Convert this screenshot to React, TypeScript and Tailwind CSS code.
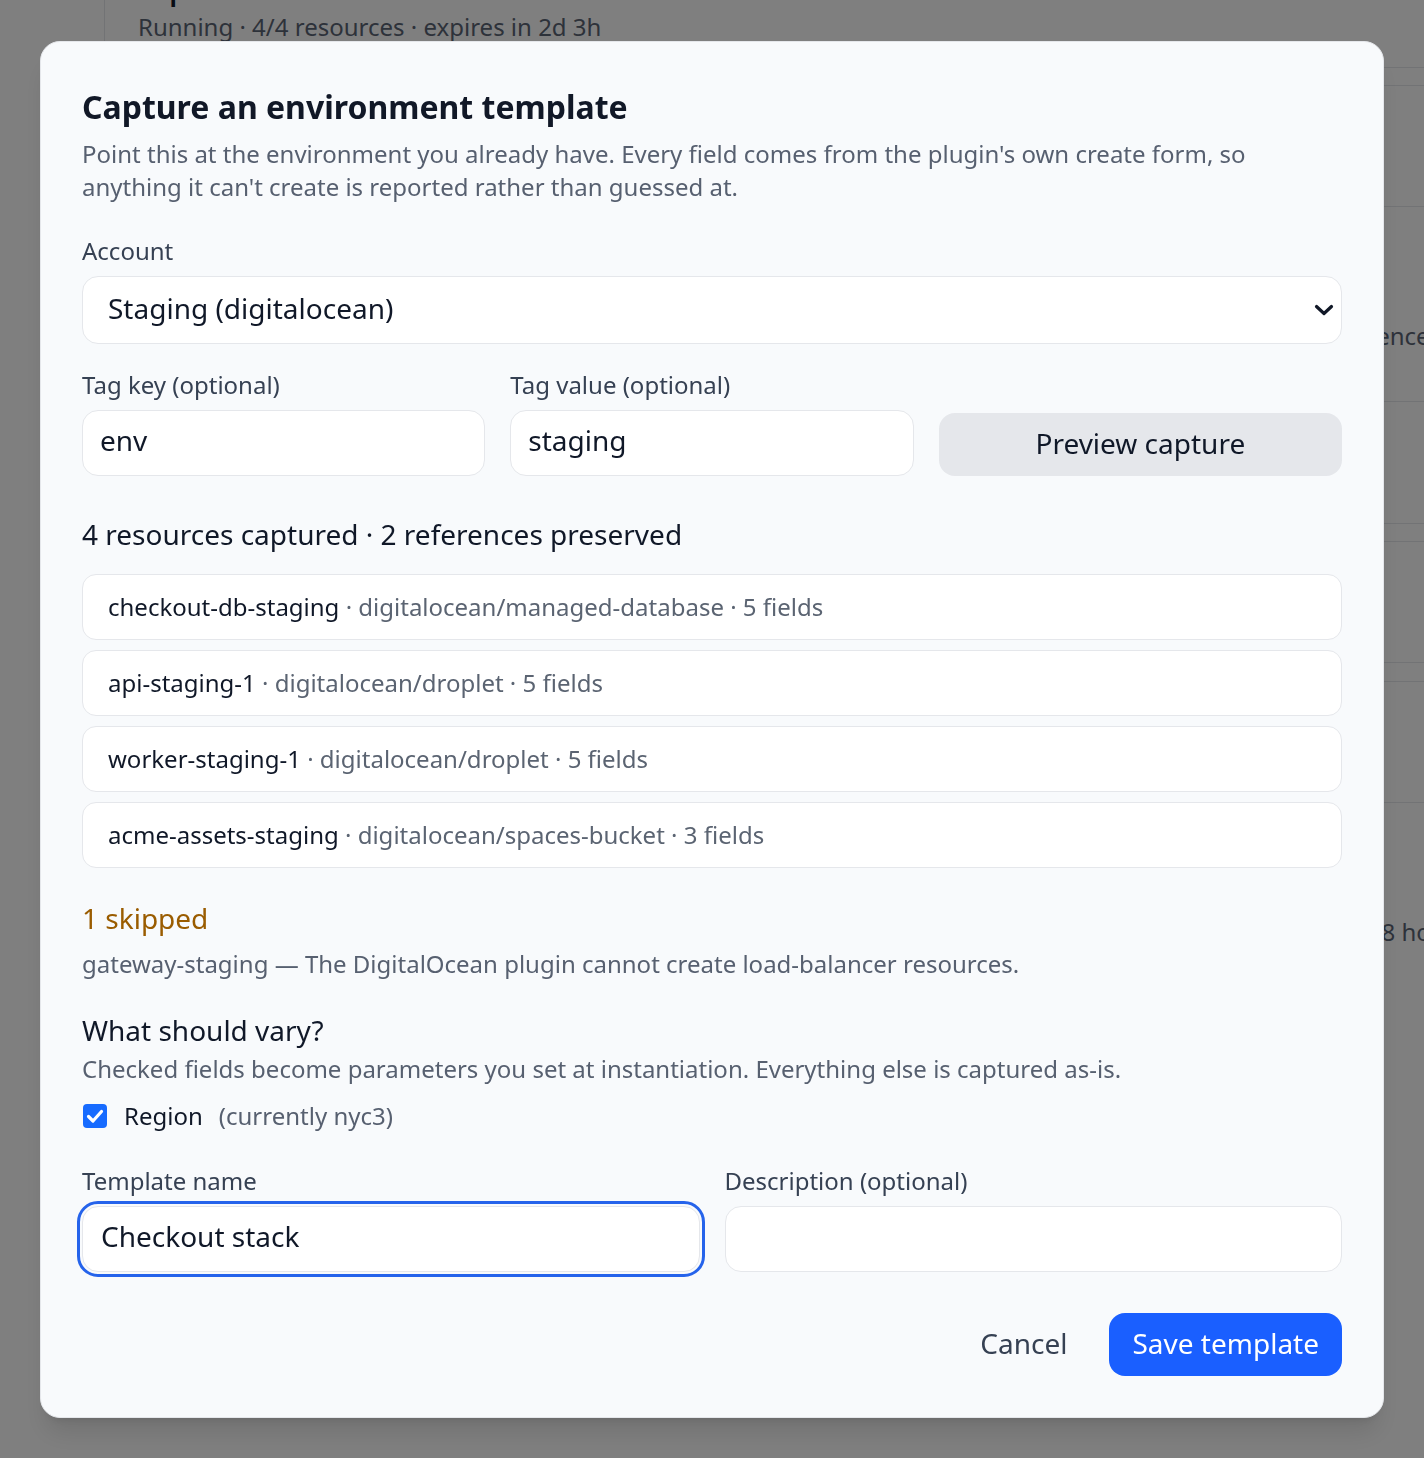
import React from "react";

const resources = [
  { name: "checkout-db-staging", meta: "digitalocean/managed-database · 5 fields" },
  { name: "api-staging-1", meta: "digitalocean/droplet · 5 fields" },
  { name: "worker-staging-1", meta: "digitalocean/droplet · 5 fields" },
  { name: "acme-assets-staging", meta: "digitalocean/spaces-bucket · 3 fields" },
];

function BackgroundPage() {
  return (
    <div className="flex h-full w-[1760px] items-start">
      <aside className="h-[900px] w-[105px] shrink-0 border-r border-gray-200" />
      <main className="flex-1 pl-[33px] pr-[40px]">
        <header className="-mt-[27px] border-b border-gray-200 pb-[24px]">
          <h1 className="text-[28px] font-semibold leading-[32px] text-gray-900">Express checkout</h1>
          <p className="mt-[5px] text-[24px] leading-[33px] text-[#5b6475]">Running · 4/4 resources · expires in 2d 3h</p>
        </header>
        <section className="mt-[17px] rounded-[14px] border border-gray-200">
          <div className="h-[121px] border-b border-gray-200 px-[24px]" />
          <div className="flex h-[195px] items-start border-b border-gray-200 px-[24px] pt-[112px] text-[24px] leading-[33px] text-[#5b6475]">
            <div className="w-[1159px] shrink-0">Captured resources</div>
            <div>references</div>
          </div>
          <div className="h-[121px] px-[24px]" />
        </section>
        <section className="mt-[17px] h-[122px] rounded-[14px] border border-gray-200" />
        <section className="mt-[18px] border-t border-gray-200">
          <div className="h-[121px] border-b border-gray-200" />
          <div className="flex h-[700px] items-start px-[25px] pt-[112px] text-[24px] leading-[33px] text-[#5b6475]">
            <div className="w-[1117px] shrink-0">Last activity</div>
            <div>Idle for 48 hours</div>
          </div>
        </section>
      </main>
    </div>
  );
}

function Label({ children }: { children: React.ReactNode }) {
  return <div className="text-[24px] leading-[36px] text-gray-700">{children}</div>;
}

export default function App() {
  return (
    <div className="relative h-[1458px] w-full overflow-hidden bg-white font-['Noto_Sans',sans-serif]">
      <BackgroundPage />
      <div className="fixed inset-0 flex items-center justify-center bg-black/50 p-[40px]">
        <div className="w-full rounded-[20px] border border-gray-200 bg-[#f8fafc] p-[41px] shadow-xl">
          <h2 className="text-[32px] font-bold leading-[48px] text-[#111827]">Capture an environment template</h2>
          <p className="mt-[6px] text-[24px] leading-[33px] text-[#576070]">
            Point this at the environment you already have. Every field comes from the plugin's own create form, so
            <br />
            anything it can't create is reported rather than guessed at.
          </p>

          <div className="mt-[30px]">
            <Label>Account</Label>
            <div className="mt-[7px] flex h-[68px] items-center justify-between rounded-[16px] border border-gray-200 bg-white pb-[3px] pl-[25px] pr-[7px] text-[28px] text-gray-900">
              <span>Staging (digitalocean)</span>
              <svg width="20" height="14" viewBox="0 0 20 14" fill="none" aria-hidden="true" className="mt-[3px]">
                <path d="M2.5 3.5 L10 10.5 L17.5 3.5" stroke="#111827" strokeWidth="3.2" strokeLinecap="round" strokeLinejoin="round" />
              </svg>
            </div>
          </div>

          <div className="mt-[23px] grid grid-cols-3 items-end gap-[25px]">
            <div>
              <Label>Tag key (optional)</Label>
              <input
                defaultValue="env"
                className="mt-[7px] h-[66px] w-full rounded-[16px] border border-gray-200 bg-white pb-[5px] pl-[17px] text-[28px] text-gray-900 outline-none"
              />
            </div>
            <div>
              <Label>Tag value (optional)</Label>
              <input
                defaultValue="staging"
                className="mt-[7px] h-[66px] w-full rounded-[16px] border border-gray-200 bg-white pb-[5px] pl-[17px] text-[28px] text-gray-900 outline-none"
              />
            </div>
            <button className="h-[63px] w-full rounded-[16px] bg-gray-200 pb-[3px] text-[28px] text-gray-900">Preview capture</button>
          </div>

          <div className="mt-[38px] text-[28px] leading-[40px] text-gray-900">4 resources captured · 2 references preserved</div>

          <div className="mt-[20px] flex flex-col gap-[10px]">
            {resources.map((r) => (
              <div
                key={r.name}
                className="flex h-[66px] items-center rounded-[14px] border border-gray-200 bg-white pl-[25px] text-[24px]"
              >
                <span className="text-gray-900">{r.name}</span>
                <span className="whitespace-pre text-[#5b6472]"> · {r.meta}</span>
              </div>
            ))}
          </div>

          <div className="mt-[30px] text-[28px] leading-[40px] text-[#9a5c00]">1 skipped</div>
          <p className="mt-[9px] text-[24px] leading-[33px] text-[#576070]">
            gateway-staging — The DigitalOcean plugin cannot create load-balancer resources.
          </p>

          <div className="mt-[30px] text-[28px] leading-[40px] text-gray-900">What should vary?</div>
          <p className="mt-[2px] text-[24px] leading-[33px] text-[#576070]">
            Checked fields become parameters you set at instantiation. Everything else is captured as-is.
          </p>
          <div className="mt-[13px] flex h-[36px] items-center gap-[17px] text-[24px]">
            <span className="ml-[1px] flex h-[24px] w-[24px] items-center justify-center rounded-[4px] bg-[#176bff]">
              <svg width="24" height="24" viewBox="0 0 24 24" fill="none" aria-hidden="true">
                <path d="M5.5 12.5 L10 17 L18.5 7.5" stroke="white" strokeWidth="3.2" strokeLinecap="round" strokeLinejoin="round" />
              </svg>
            </span>
            <span className="text-gray-900">Region</span>
            <span className="-ml-[1px] text-[#576070]">(currently nyc3)</span>
          </div>

          <div className="mt-[29px] grid grid-cols-2 gap-[25px]">
            <div>
              <Label>Template name</Label>
              <input
                defaultValue="Checkout stack"
                className="mt-[7px] h-[66px] w-full rounded-[16px] border border-gray-200 bg-white pb-[5px] pl-[18px] text-[28px] text-gray-900 outline-[3.5px] outline-offset-2 outline-solid outline-[#2563eb]"
              />
            </div>
            <div>
              <Label>Description (optional)</Label>
              <input
                defaultValue=""
                className="mt-[7px] h-[66px] w-full rounded-[16px] border border-gray-200 bg-white pb-[5px] pl-[18px] text-[28px] text-gray-900 outline-none"
              />
            </div>
          </div>

          <div className="mt-[41px] flex justify-end gap-[18px]">
            <button className="h-[63px] rounded-[16px] pb-[3px] pl-[22px] pr-[24px] text-[28px] text-gray-700">Cancel</button>
            <button className="h-[63px] rounded-[16px] bg-[#1a5fff] pb-[3px] px-[23px] text-[28px] text-white">Save template</button>
          </div>
        </div>
      </div>
    </div>
  );
}
